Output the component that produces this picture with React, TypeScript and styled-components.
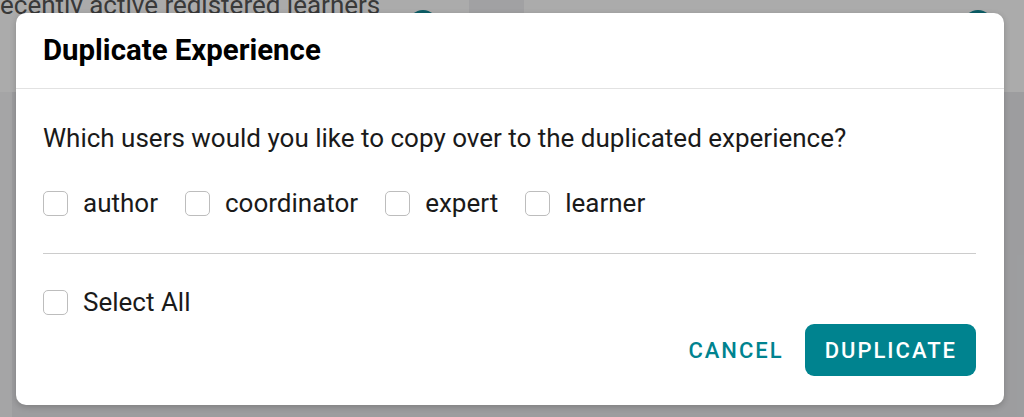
import styled, { createGlobalStyle } from "styled-components";

const GlobalStyle = createGlobalStyle`
  html, body {
    margin: 0;
    padding: 0;
    width: 1024px;
    height: 417px;
    overflow: hidden;
    font-family: Roboto, "Liberation Sans", Arial, sans-serif;
  }
`;

const Page = styled.div`
  position: relative;
  width: 1024px;
  height: 417px;
  background: #eaebee;
  overflow: hidden;
`;

const TopBar = styled.div`
  display: flex;
  height: 92px;
  background: #ffffff;
`;

const Panel = styled.div<{ $w: number }>`
  display: flex;
  justify-content: space-between;
  width: ${(p) => p.$w}px;
  padding-right: ${(p) => (p.$w > 500 ? 56 : 32)}px;
  box-sizing: border-box;
`;

const Gutter = styled.div`
  width: 55px;
  background: #f0f0f4;
`;

const PanelText = styled.span`
  margin-left: -16px;
  margin-top: -10px;
  font-size: 26px;
  color: #555;
  white-space: nowrap;
`;

const Avatar = styled.span`
  margin-top: 10px;
  width: 28px;
  height: 28px;
  border-radius: 50%;
  background: #128b98;
`;

const SideStrip = styled.div`
  width: 12px;
  height: 325px;
  background: #f6f6f8;
`;

const Backdrop = styled.div`
  position: absolute;
  inset: 0;
  background: rgba(0, 0, 0, 0.33);
`;

const Dialog = styled.div`
  position: absolute;
  left: 16px;
  top: 13px;
  width: 988px;
  height: 392px;
  box-sizing: border-box;
  background: #ffffff;
  border-radius: 10px;
  box-shadow: 0 2px 6px rgba(0, 0, 0, 0.2);
  display: flex;
  flex-direction: column;
`;

const Header = styled.div`
  height: 76px;
  box-sizing: border-box;
  padding: 0 27px;
  display: flex;
  align-items: center;
  border-bottom: 1px solid #e2e2e2;
`;

const Title = styled.h2`
  margin: 0;
  font-size: 29.4px;
  font-weight: 700;
  color: #000;
  padding-bottom: 2px;
`;

const Body = styled.div`
  padding: 34px 28px 0 27px;
  display: flex;
  flex-direction: column;
`;

const Question = styled.p`
  margin: 0;
  font-size: 26px;
  line-height: 30px;
  color: #1a1a1a;
`;

const OptionRow = styled.div`
  display: flex;
  gap: 27px;
  margin-top: 38px;
`;

const Option = styled.label`
  display: flex;
  align-items: center;
  gap: 15px;
  font-size: 26px;
  line-height: 25px;
  color: #1a1a1a;
`;

const Box = styled.span`
  width: 25px;
  height: 25px;
  box-sizing: border-box;
  border: 1.5px solid #bdbdbd;
  border-radius: 5px;
  background: #fff;
`;

const Divider = styled.hr`
  margin: 37px 0 0;
  border: none;
  border-top: 1.5px solid #cccccc;
`;

const SelectAllRow = styled.div`
  display: flex;
  margin-top: 36px;
`;

const Actions = styled.div`
  display: flex;
  justify-content: flex-end;
  align-items: center;
  gap: 13px;
  margin-top: 9px;
`;

const Button = styled.button<{ $primary?: boolean }>`
  height: 52px;
  padding: ${(p) => (p.$primary ? "0 19px 0 20px" : "0 8px")};
  border: none;
  border-radius: 9px;
  font-family: Roboto, "Liberation Sans", Arial, sans-serif;
  font-size: 22px;
  font-weight: 500;
  letter-spacing: 2px;
  text-transform: uppercase;
  background: ${(p) => (p.$primary ? "#00838f" : "transparent")};
  color: ${(p) => (p.$primary ? "#ffffff" : "#00838f")};
  cursor: pointer;
`;

const roles = ["author", "coordinator", "expert", "learner"];

export default function App() {
  return (
    <>
      <GlobalStyle />
      <Page>
        <TopBar>
          <Panel $w={469}>
            <PanelText>Recently active registered learners</PanelText>
            <Avatar />
          </Panel>
          <Gutter />
          <Panel $w={500}>
            <span />
            <Avatar />
          </Panel>
        </TopBar>
        <SideStrip />
        <Backdrop />
        <Dialog>
          <Header>
            <Title>Duplicate Experience</Title>
          </Header>
          <Body>
            <Question>
              Which users would you like to copy over to the duplicated experience?
            </Question>
            <OptionRow>
              {roles.map((r) => (
                <Option key={r}>
                  <Box />
                  {r}
                </Option>
              ))}
            </OptionRow>
            <Divider />
            <SelectAllRow>
              <Option>
                <Box />
                Select All
              </Option>
            </SelectAllRow>
            <Actions>
              <Button>Cancel</Button>
              <Button $primary>Duplicate</Button>
            </Actions>
          </Body>
        </Dialog>
      </Page>
    </>
  );
}
